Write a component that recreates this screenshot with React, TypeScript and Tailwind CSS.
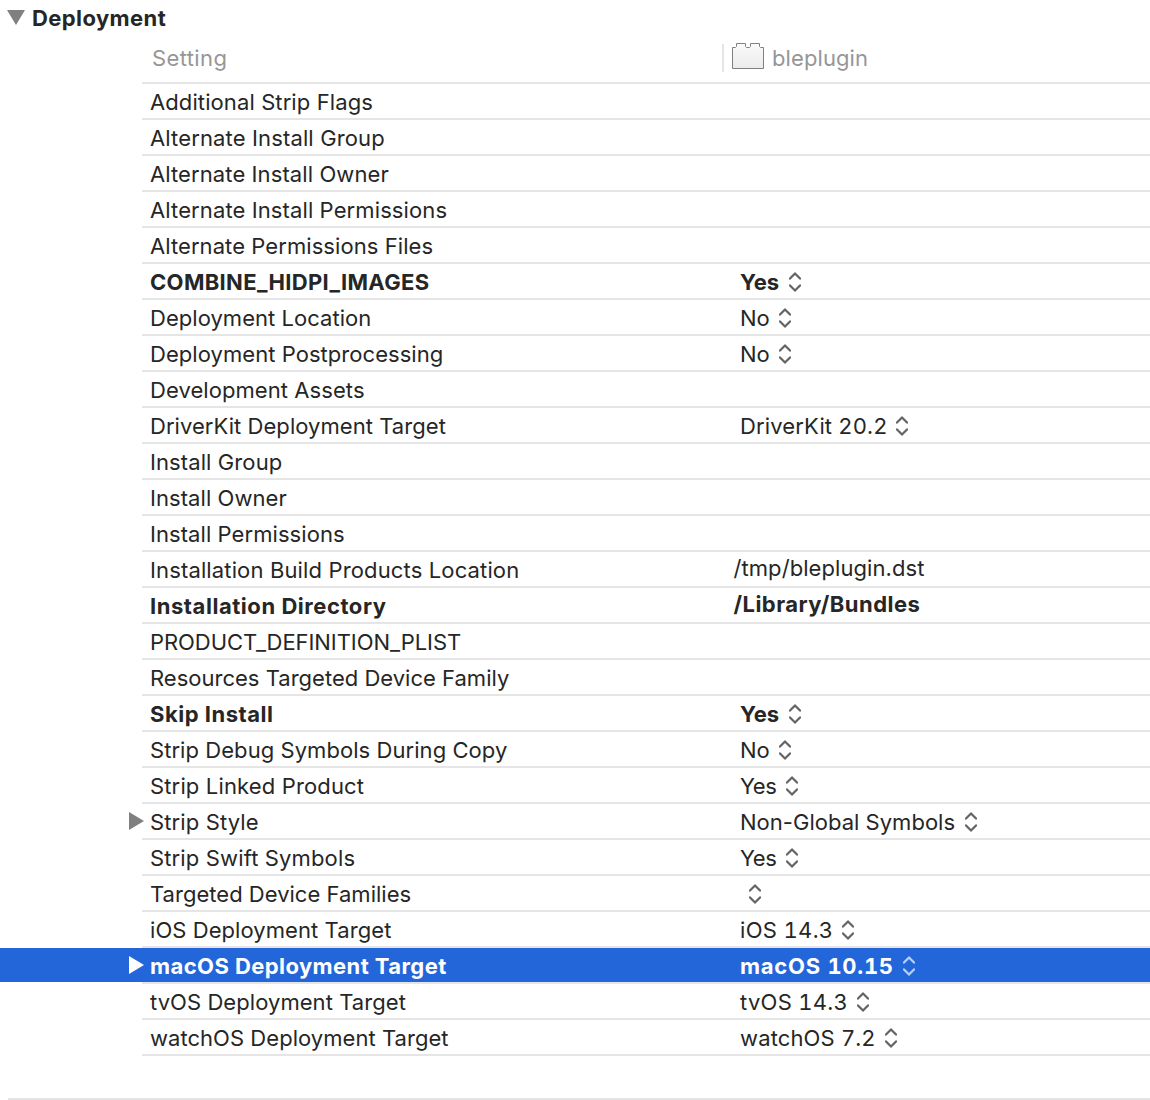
type Setting = {
  label: string;
  tracking: string;
  value?: string;
  valueStyle?: string;
  bold?: boolean;
  kind?: "menu" | "text";
  expandable?: boolean;
  selected?: boolean;
};

const settings: Setting[] = [
  { label: "Additional Strip Flags", tracking: "tracking-[0.1px]" },
  { label: "Alternate Install Group", tracking: "tracking-[0.14px]" },
  { label: "Alternate Install Owner", tracking: "tracking-[0.1px]" },
  { label: "Alternate Install Permissions", tracking: "tracking-[0.11px]" },
  { label: "Alternate Permissions Files", tracking: "tracking-[0.07px]" },
  { label: "COMBINE_HIDPI_IMAGES", tracking: "tracking-[0.33px]", value: "Yes", kind: "menu", bold: true, valueStyle: "w-[49px]" },
  { label: "Deployment Location", tracking: "tracking-[0.04px]", value: "No", kind: "menu", valueStyle: "w-[39px] tracking-[-0.2px]" },
  { label: "Deployment Postprocessing", tracking: "tracking-[0.05px]", value: "No", kind: "menu", valueStyle: "w-[39px] tracking-[-0.2px]" },
  { label: "Development Assets", tracking: "tracking-[0.07px]" },
  { label: "DriverKit Deployment Target", tracking: "tracking-[0.05px]", value: "DriverKit 20.2", kind: "menu", valueStyle: "w-[156px] tabular-nums tracking-[0.15px]" },
  { label: "Install Group", tracking: "tracking-[0.1px]" },
  { label: "Install Owner", tracking: "tracking-[0.07px]" },
  { label: "Install Permissions", tracking: "tracking-[0.07px]" },
  { label: "Installation Build Products Location", tracking: "tracking-[0.14px]", value: "/tmp/bleplugin.dst", kind: "text", valueStyle: "tracking-[0.07px]" },
  { label: "Installation Directory", tracking: "tracking-[0.55px]", value: "/Library/Bundles", kind: "text", bold: true, valueStyle: "tracking-[0.47px]" },
  { label: "PRODUCT_DEFINITION_PLIST", tracking: "tracking-[-0.06px]" },
  { label: "Resources Targeted Device Family", tracking: "tracking-[0.01px]" },
  { label: "Skip Install", tracking: "tracking-[0.52px]", value: "Yes", kind: "menu", bold: true, valueStyle: "w-[49px]" },
  { label: "Strip Debug Symbols During Copy", tracking: "tracking-[0.06px]", value: "No", kind: "menu", valueStyle: "w-[39px] tracking-[-0.2px]" },
  { label: "Strip Linked Product", tracking: "tracking-[0.15px]", value: "Yes", kind: "menu", valueStyle: "w-[46px] tracking-[-0.4px]" },
  { label: "Strip Style", tracking: "tracking-[0.13px]", value: "Non-Global Symbols", kind: "menu", expandable: true, valueStyle: "w-[225px] tracking-[0.02px]" },
  { label: "Strip Swift Symbols", tracking: "tracking-[0.14px]", value: "Yes", kind: "menu", valueStyle: "w-[46px] tracking-[-0.4px]" },
  { label: "Targeted Device Families", tracking: "tracking-[0.02px]", value: "", kind: "menu", valueStyle: "w-[9px]" },
  { label: "iOS Deployment Target", tracking: "tracking-[0.07px]", value: "iOS 14.3", kind: "menu", valueStyle: "w-[102px] tabular-nums tracking-[0.32px]" },
  { label: "macOS Deployment Target", tracking: "tracking-[0.42px]", value: "macOS 10.15", kind: "menu", bold: true, expandable: true, selected: true, valueStyle: "w-[163px] tabular-nums tracking-[0.72px]" },
  { label: "tvOS Deployment Target", tracking: "tracking-[0.06px]", value: "tvOS 14.3", kind: "menu", valueStyle: "w-[117px] tabular-nums tracking-[0.28px]" },
  { label: "watchOS Deployment Target", tracking: "tracking-[0.04px]", value: "watchOS 7.2", kind: "menu", valueStyle: "w-[145px] tabular-nums tracking-[0.14px]" },
];

function Chevrons({ selected }: { selected?: boolean }) {
  return (
    <svg
      className={`mt-[2px] h-5 w-3 shrink-0 ${selected ? "text-[#b9d0f5]" : "text-[#646464]"}`}
      viewBox="0 0 12 20"
      fill="none"
      stroke="currentColor"
      strokeWidth="2.2"
      strokeLinecap="round"
      strokeLinejoin="round"
    >
      <path d="M1 6.6 6 1.4 11 6.6M1 13.4l5 5.2 5-5.2" />
    </svg>
  );
}

function Row({ s }: { s: Setting }) {
  return (
    <div className={`flex h-9 ${s.selected ? "text-white" : ""}`}>
      <div className={`flex h-[34px] w-[142px] shrink-0 items-center pl-[129px] ${s.selected ? "bg-[#2366da]" : ""}`}>
        {s.expandable && (
          <svg className={`relative z-10 h-[18px] w-[15px] shrink-0 ${s.selected ? "text-white" : "text-[#808080]"}`} viewBox="0 0 15 18">
            <path d="M0 0 15 9 0 18Z" fill="currentColor" />
          </svg>
        )}
      </div>
      <div
        className={`flex flex-1 items-center border-b-2 border-[#e5e5e5] ${s.selected ? "bg-[#2366da]" : ""} ${
          s.bold ? "font-bold" : ""
        }`}
      >
        <span className={`w-[598px] shrink-0 pl-2 pt-[3px] ${s.tracking}`}>{s.label}</span>
        {s.kind === "menu" && (
          <span className="flex items-center">
            <span className={`h-[30px] pt-[3px] ${s.valueStyle}`}>{s.value}</span>
            <Chevrons selected={s.selected} />
          </span>
        )}
        {s.kind === "text" && <span className={`-ml-[6.5px] -mt-px ${s.valueStyle}`}>{s.value}</span>}
      </div>
    </div>
  );
}

export default function App() {
  return (
    <div className="h-[1100px] w-[1150px] overflow-hidden whitespace-nowrap bg-white font-['Inter',sans-serif] text-[22px] leading-[27px] text-[#262626]">
      <div className="flex h-9 items-center pl-[7px] font-bold">
        <svg className="mr-[7px] -mt-[1px] h-[15px] w-[18px]" viewBox="0 0 18 15">
          <path d="M0 0H18L9 15Z" fill="#808080" />
        </svg>
        <span className="tracking-[0.4px]">Deployment</span>
      </div>
      <div className="ml-[142px] flex h-12 border-b-2 border-[#e5e5e5] text-[#969696]">
        <span className="w-[580px] pl-[10px] pt-[9px] tracking-[0.38px]">Setting</span>
        <div className="mt-2 h-7 w-[2px] bg-[#e5e5e5]" />
        <svg className="ml-2 mt-[7px] h-[26px] w-8" viewBox="0 0 32 26">
          <defs>
            <linearGradient id="brick" x1="0" y1="0" x2="0" y2="1">
              <stop offset="0" stopColor="#fafafa" />
              <stop offset="1" stopColor="#ebebeb" />
            </linearGradient>
          </defs>
          <path
            d="M.5 4.5H3.5L4.5 3.5V.5H13.5V3.5L14.5 4.5H17.5L18.5 3.5V.5H27.5V3.5L28.5 4.5H31.5V25.5H.5Z"
            fill="url(#brick)"
            stroke="#808080"
          />
        </svg>
        <span className="ml-2 pt-[9px] tracking-[0.1px]">bleplugin</span>
      </div>
      {settings.map((s) => (
        <Row key={s.label} s={s} />
      ))}
      <div className="ml-2 mt-[42px] h-[2px] bg-[#e5e5e5]" />
    </div>
  );
}
